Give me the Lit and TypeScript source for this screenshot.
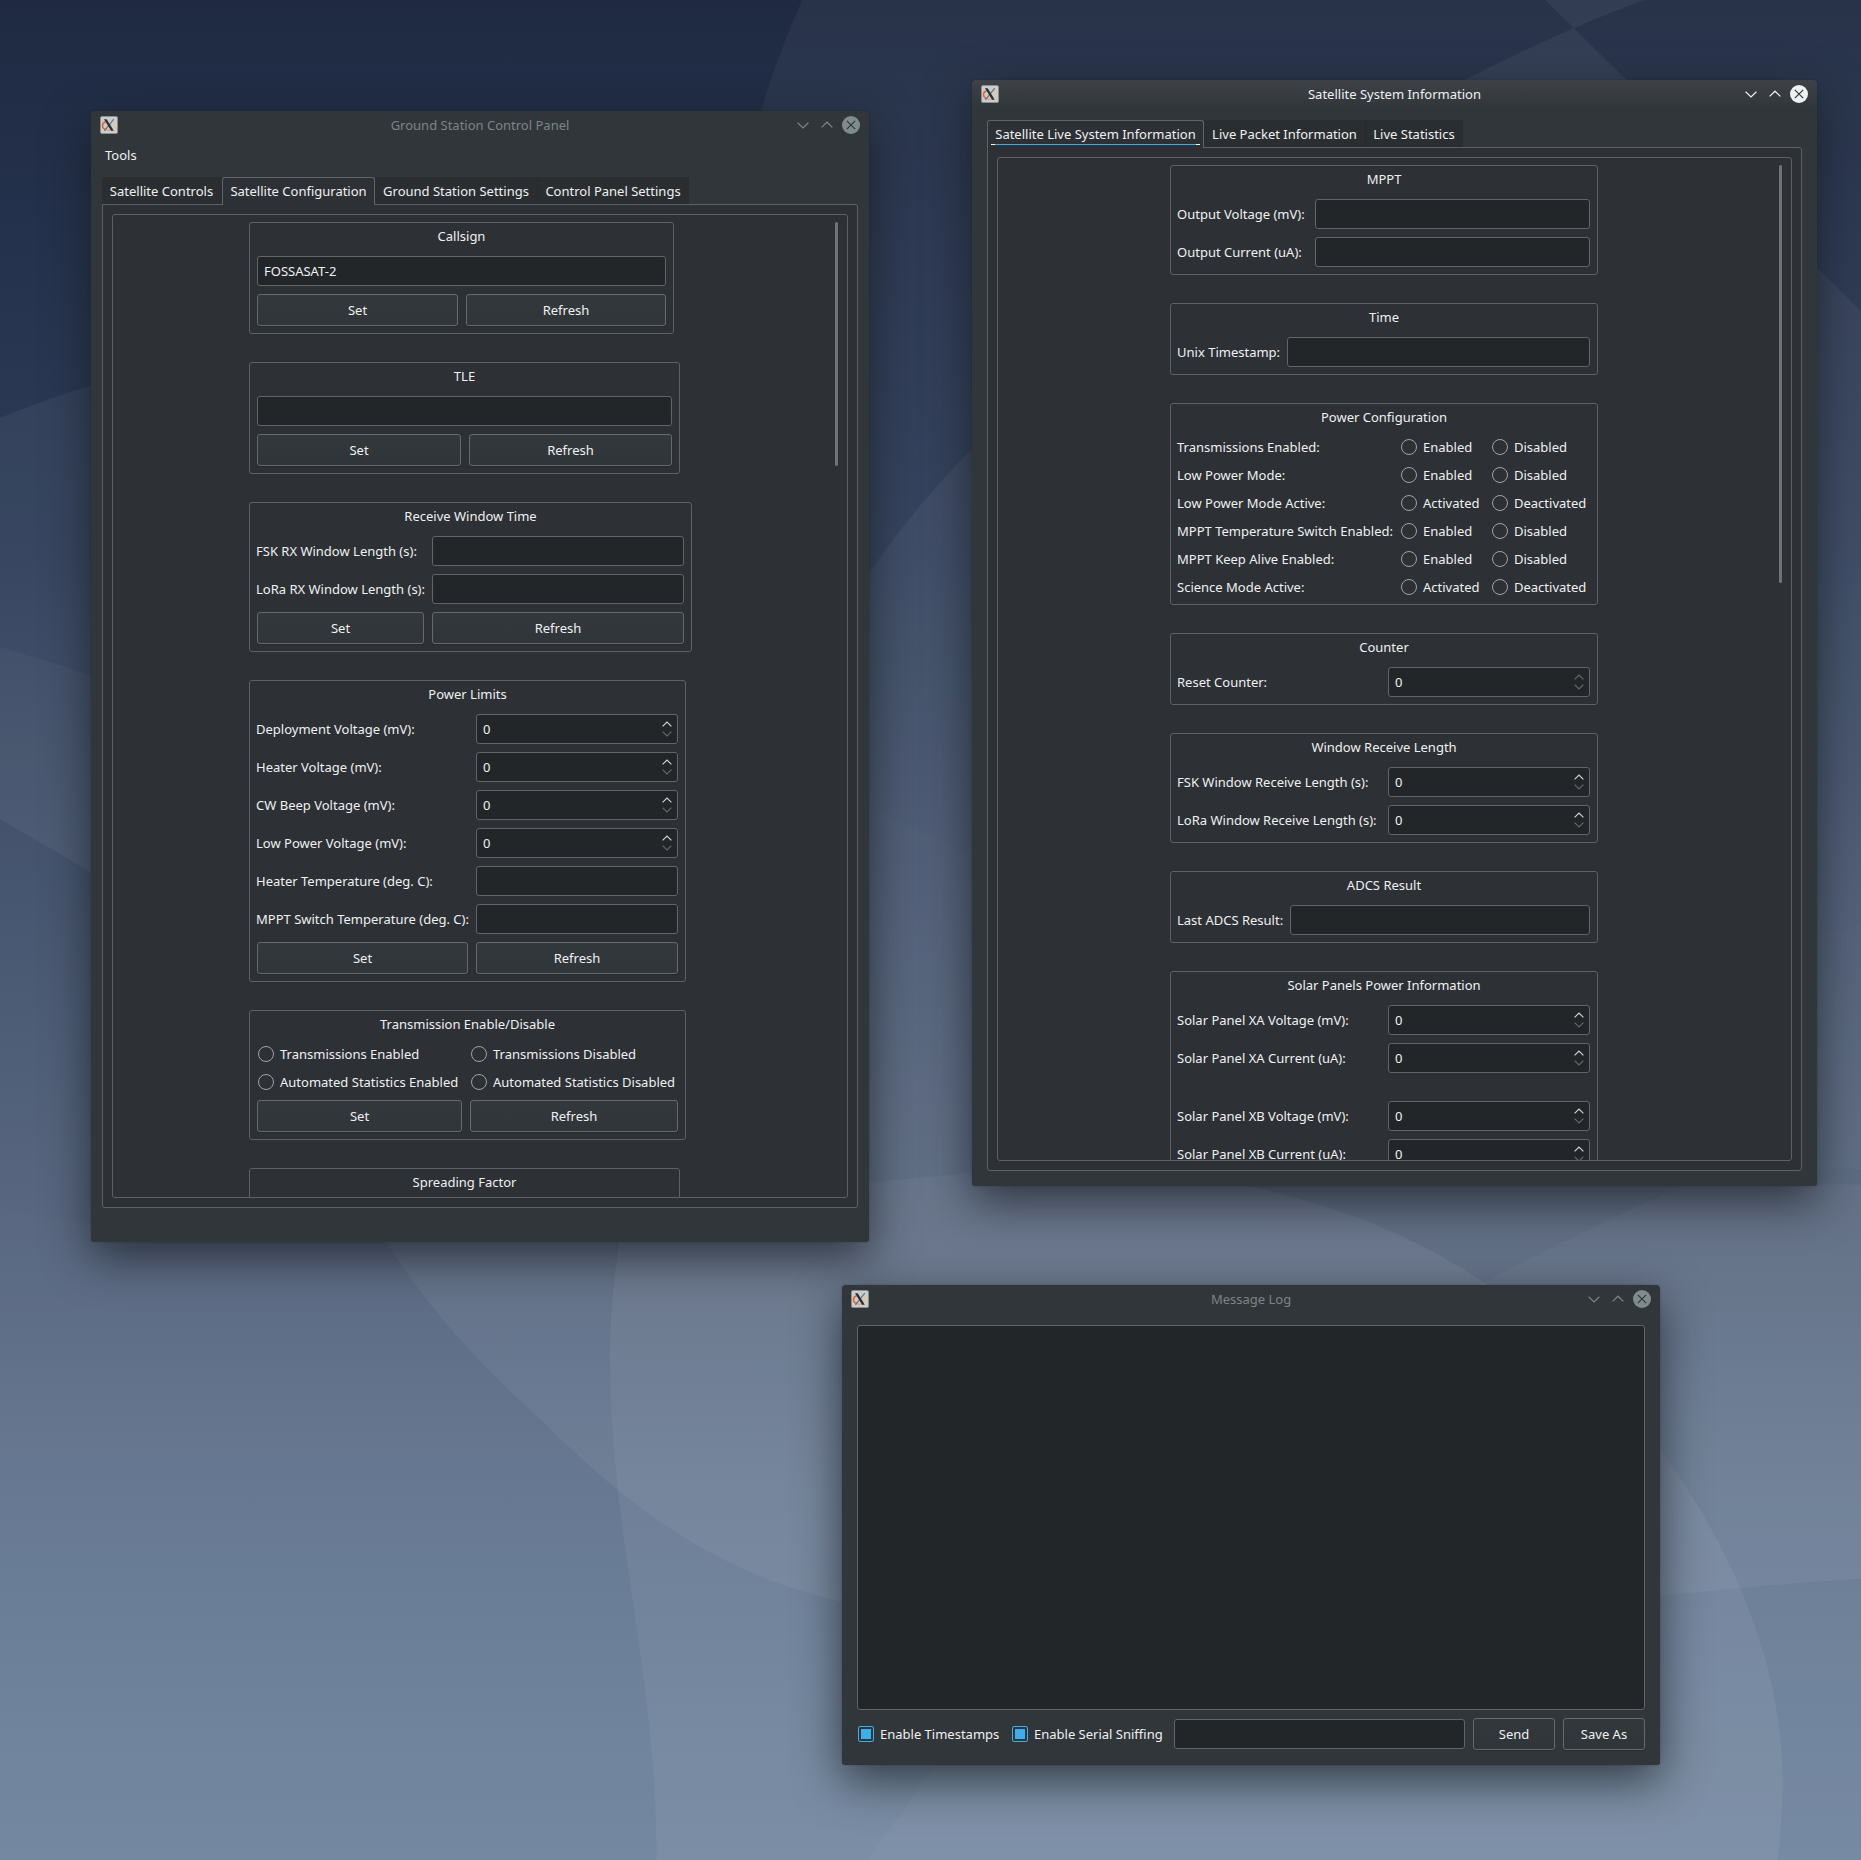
import { LitElement, html, css, svg, nothing, TemplateResult } from "lit";
import { customElement, property } from "lit/decorators.js";
import { classMap } from "lit/directives/class-map.js";
import { styleMap } from "lit/directives/style-map.js";

type Row =
  | { kind: "edit"; label?: string; value?: string }
  | { kind: "spin"; label: string; value: string; frozen?: boolean; spaced?: boolean }
  | { kind: "radio"; label?: string; options: [string, string] }
  | { kind: "buttons" };

interface Group {
  title: string;
  width: number;
  columns: string;
  rows: Row[];
}

interface Tab {
  label: string;
  width: number;
}

const edit = (label?: string, value = ""): Row => ({ kind: "edit", label, value });
const spin = (label: string, extra: { frozen?: boolean; spaced?: boolean } = {}): Row => ({
  kind: "spin",
  label,
  value: "0",
  ...extra,
});
const radio = (a: string, b: string, label?: string): Row => ({ kind: "radio", label, options: [a, b] });
const buttons: Row = { kind: "buttons" };

const CONFIG_TABS: Tab[] = [
  { label: "Satellite Controls", width: 120 },
  { label: "Satellite Configuration", width: 153 },
  { label: "Ground Station Settings", width: 163 },
  { label: "Control Panel Settings", width: 151 },
];

const INFO_TABS: Tab[] = [
  { label: "Satellite Live System Information", width: 217 },
  { label: "Live Packet Information", width: 162 },
  { label: "Live Statistics", width: 97 },
];

const CONFIG_GROUPS: Group[] = [
  { title: "Callsign", width: 425, columns: "201px minmax(0, 1fr)", rows: [edit(undefined, "FOSSASAT-2"), buttons] },
  { title: "TLE", width: 431, columns: "204px minmax(0, 1fr)", rows: [edit(), buttons] },
  {
    title: "Receive Window Time",
    width: 443,
    columns: "167px minmax(0, 1fr)",
    rows: [edit("FSK RX Window Length (s):"), edit("LoRa RX Window Length (s):"), buttons],
  },
  {
    title: "Power Limits",
    width: 437,
    columns: "211px minmax(0, 1fr)",
    rows: [
      spin("Deployment Voltage (mV):"),
      spin("Heater Voltage (mV):"),
      spin("CW Beep Voltage (mV):"),
      spin("Low Power Voltage (mV):"),
      edit("Heater Temperature (deg. C):"),
      edit("MPPT Switch Temperature (deg. C):"),
      buttons,
    ],
  },
  {
    title: "Transmission Enable/Disable",
    width: 437,
    columns: "205px minmax(0, 1fr)",
    rows: [
      radio("Transmissions Enabled", "Transmissions Disabled"),
      radio("Automated Statistics Enabled", "Automated Statistics Disabled"),
      buttons,
    ],
  },
  { title: "Spreading Factor", width: 431, columns: "204px minmax(0, 1fr)", rows: [edit()] },
];

const INFO_GROUPS: Group[] = [
  {
    title: "MPPT",
    width: 428,
    columns: "129px 1fr",
    rows: [edit("Output Voltage (mV):"), edit("Output Current (uA):")],
  },
  { title: "Time", width: 428, columns: "101px 1fr", rows: [edit("Unix Timestamp:")] },
  {
    title: "Power Configuration",
    width: 428,
    columns: "214px 83px minmax(0, 1fr)",
    rows: [
      radio("Enabled", "Disabled", "Transmissions Enabled:"),
      radio("Enabled", "Disabled", "Low Power Mode:"),
      radio("Activated", "Deactivated", "Low Power Mode Active:"),
      radio("Enabled", "Disabled", "MPPT Temperature Switch Enabled:"),
      radio("Enabled", "Disabled", "MPPT Keep Alive Enabled:"),
      radio("Activated", "Deactivated", "Science Mode Active:"),
    ],
  },
  { title: "Counter", width: 428, columns: "202px 1fr", rows: [spin("Reset Counter:", { frozen: true })] },
  {
    title: "Window Receive Length",
    width: 428,
    columns: "202px 1fr",
    rows: [spin("FSK Window Receive Length (s):"), spin("LoRa Window Receive Length (s):")],
  },
  { title: "ADCS Result", width: 428, columns: "104px 1fr", rows: [edit("Last ADCS Result:")] },
  {
    title: "Solar Panels Power Information",
    width: 428,
    columns: "202px 1fr",
    rows: [
      spin("Solar Panel XA Voltage (mV):"),
      spin("Solar Panel XA Current (uA):"),
      spin("Solar Panel XB Voltage (mV):", { spaced: true }),
      spin("Solar Panel XB Current (uA):"),
    ],
  },
];

const controls = css`
  * {
    box-sizing: border-box;
  }
  .edit,
  .spin {
    height: 30px;
    border: 1px solid #616569;
    border-radius: 3px;
    background: #232629;
    padding: 0 6px;
    display: flex;
    align-items: center;
  }
  .button {
    height: 32px;
    border: 1px solid #66696d;
    border-radius: 3px;
    background: linear-gradient(#33383c, #303539);
    box-shadow: 0 1px 1px rgba(0, 0, 0, 0.18);
    display: flex;
    align-items: center;
    justify-content: center;
  }
`;

/** A framed, titled box holding a form grid. */
@customElement("form-group")
export class FormGroup extends LitElement {
  @property({ attribute: false }) group!: Group;

  static styles = [
    controls,
    css`
      :host {
        display: block;
        flex: none;
      }
      .group {
        border: 1px solid #5d6165;
        border-radius: 3px;
        padding: 3px 7px 7px;
      }
      .title {
        height: 30px;
        text-align: center;
      }
      .rows {
        display: grid;
        gap: 8px;
      }
      .row {
        display: grid;
        column-gap: 8px;
        align-items: center;
      }
      .spaced {
        margin-top: 20px;
      }
      .label {
        margin: 0 -8px 0 -1px;
        white-space: nowrap;
      }
      .wide {
        grid-column: 1 / -1;
      }
      .spin {
        justify-content: space-between;
        padding-right: 5px;
      }
      .arrows {
        width: 10px;
        height: 18px;
        fill: none;
        stroke: #d3d5d6;
        stroke-width: 1.15;
      }
      .arrows .off {
        stroke: #64686b;
      }
      .radio {
        display: flex;
        align-items: center;
        gap: 6px;
        padding-left: 1px;
        height: 20px;
        white-space: nowrap;
      }
      .dot {
        width: 16px;
        height: 16px;
        flex: none;
        border: 1px solid #a0a3a5;
        border-radius: 50%;
      }
    `,
  ];

  private renderRow(row: Row): TemplateResult {
    switch (row.kind) {
      case "edit":
        return row.label
          ? html`<div class="label">${row.label}</div><div class="edit">${row.value}</div>`
          : html`<div class="edit wide">${row.value}</div>`;
      case "spin":
        return html`<div class="label">${row.label}</div>
          <div class="spin">
            <span>${row.value}</span>
            <svg class="arrows" viewBox="0 0 10 18">
              <path class=${row.frozen ? "off" : ""} d="M0.6 6.3 L5 2 L9.4 6.3" />
              <path class="off" d="M0.6 11.7 L5 16 L9.4 11.7" />
            </svg>
          </div>`;
      case "radio":
        return html`${row.label ? html`<div class="label">${row.label}</div>` : nothing}
        ${row.options.map((o) => html`<div class="radio"><span class="dot"></span>${o}</div>`)}`;
      case "buttons":
        return html`<div class="button">Set</div><div class="button">Refresh</div>`;
    }
  }

  render() {
    const g = this.group;
    return html`<div class="group" style=${styleMap({ width: `${g.width}px` })}>
      <div class="title">${g.title}</div>
      <div class="rows">
        ${g.rows.map(
          (r) => html`<div
            class=${classMap({ row: true, spaced: r.kind === "spin" && !!r.spaced })}
            style=${styleMap({ gridTemplateColumns: g.columns })}
          >
            ${this.renderRow(r)}
          </div>`
        )}
      </div>
    </div>`;
  }
}

@customElement("tabbed-form")
export class TabbedForm extends LitElement {
  @property({ attribute: false }) tabs: Tab[] = [];
  @property({ attribute: false }) groups: Group[] = [];
  @property({ type: Number }) active = 0;
  @property({ type: Number }) indent = 0;
  @property({ type: Number }) thumb = 0;
  @property({ type: Boolean }) focused = false;

  static styles = [
    controls,
    css`
      :host {
        display: flex;
        flex-direction: column;
        flex: 1;
        min-height: 0;
      }
      .tabs {
        display: flex;
        align-items: flex-start;
        height: 27px;
        flex: none;
      }
      .tab {
        height: 27px;
        line-height: 20px;
        padding: 4px 1px 0 0;
        text-align: center;
        background: #2a2e31;
        white-space: nowrap;
        flex: none;
      }
      .tab:first-child {
        border-top-left-radius: 3px;
      }
      .tab:last-child {
        border-top-right-radius: 3px;
      }
      .divided {
        padding-right: 0;
        border-right: 1px solid #262a2d;
      }
      .active {
        height: 28px;
        z-index: 1;
        position: relative;
        padding: 3px 0 0;
        border: 1px solid #616569;
        border-bottom: 0;
        border-radius: 3px 3px 0 0;
        background: #2d3035;
      }
      .focus {
        height: 1px;
        margin: 0 3px;
        background: linear-gradient(90deg, #fcfcfc 4px, #3daee9 4px, #3daee9 calc(100% - 4px), #fcfcfc calc(100% - 4px));
      }
      .panel {
        flex: 1;
        min-height: 0;
        border: 1px solid #5d6165;
        border-radius: 0 3px 3px 3px;
        background: #2d3035;
        padding: 9px;
        display: flex;
      }
      .scroll {
        flex: 1;
        border: 1px solid #5d6165;
        border-radius: 3px;
        display: flex;
        justify-content: space-between;
        overflow: hidden;
        padding: 7px 9px 0 0;
      }
      .column {
        display: flex;
        flex-direction: column;
        gap: 28px;
      }
      .thumb {
        width: 3px;
        border-radius: 2px;
        background: #6f7376;
      }
    `,
  ];

  render() {
    return html`
      <div class="tabs">
        ${this.tabs.map(
          (t, i) => html`<div
            class=${classMap({
              tab: true,
              active: i === this.active,
              divided: i > this.active && i < this.tabs.length - 1,
            })}
            style=${styleMap({ width: `${t.width}px` })}
          >
            ${t.label}${this.focused && i === this.active ? html`<div class="focus"></div>` : nothing}
          </div>`
        )}
      </div>
      <div class="panel">
        <div class="scroll">
          <div class="column" style=${styleMap({ marginLeft: `${this.indent}px` })}>
            ${this.groups.map((g) => html`<form-group .group=${g}></form-group>`)}
          </div>
          <div class="thumb" style=${styleMap({ height: `${this.thumb}px` })}></div>
        </div>
      </div>
    `;
  }
}

/** Window frame with title bar. */
@customElement("desk-window")
export class DeskWindow extends LitElement {
  @property() heading = "";
  @property({ type: Boolean, reflect: true }) active = false;

  static styles = css`
    * {
      box-sizing: border-box;
    }
    :host {
      display: flex;
      flex-direction: column;
      background: #31363a;
      border-radius: 4px 4px 3px 3px;
      box-shadow: 0 15px 46px rgba(22, 26, 30, 0.7), 0 0 2px rgba(16, 20, 26, 0.3);
    }
    .bar {
      height: 28px;
      flex: none;
      display: grid;
      grid-template-columns: 66px 1fr 66px;
      align-items: center;
      padding: 0 9px;
      border-radius: 4px 4px 0 0;
      color: #7c8586;
    }
    :host([active]) .bar {
      background: linear-gradient(#3e4248, #31363a);
      color: #eff0f1;
    }
    .title {
      text-align: center;
    }
    .icon {
      width: 18px;
      height: 18px;
      display: block;
    }
    .tools {
      width: 66px;
      height: 18px;
      display: block;
      fill: none;
      stroke: currentColor;
      stroke-width: 1.2;
    }
    .disc {
      fill: #7f8c8d;
      stroke: none;
    }
    :host([active]) .disc {
      fill: #eff0f1;
    }
    .cross {
      stroke: #31363b;
    }
  `;

  render() {
    return html`
      <div class="bar">
        <svg class="icon" viewBox="0 0 18 18">
          <rect x="0.5" y="0.5" width="17" height="17" rx="1.5" fill="#c9cdcf" stroke="#8b9093" />
          <path d="M5.6 5.8 C1.4 7.4 1.4 12 5.8 13.6" fill="none" stroke="#e9612f" stroke-width="1.5" />
          <path d="M5.8 13.6 C7.6 14.5 10.4 14.5 12.2 13.6" fill="none" stroke="#e3a77c" stroke-width="1.2" />
          <path d="M12.2 13.6 C16.4 12 16.4 8.4 13.4 6.2" fill="none" stroke="#e8c999" stroke-width="1.5" />
          <path d="M13.8 3.2 L4.4 14.8" stroke="#6d7274" stroke-width="1.2" />
          <path d="M4 3.2 H6.7 L13.8 14.8 H11.1 Z" fill="#2b2f32" />
        </svg>
        <div class="title">${this.heading}</div>
        <svg class="tools" viewBox="0 0 66 18">
          <path d="M3.6 6.8 L9 12 L14.4 6.8" />
          <path d="M27.6 11.4 L33 6.2 L38.4 11.4" />
          <circle class="disc" cx="57" cy="9" r="9" />
          <path class="cross" d="M52.8 4.8 L61.2 13.2 M61.2 4.8 L52.8 13.2" />
        </svg>
      </div>
      <slot></slot>
    `;
  }
}

const wallpaper = svg`
  <defs>
    <linearGradient id="sky" x1="0" y1="0" x2="0" y2="1">
      <stop offset="0" stop-color="#1f2a42" />
      <stop offset="0.13" stop-color="#25324d" />
      <stop offset="0.3" stop-color="#2e3d59" />
      <stop offset="0.45" stop-color="#3f4e69" />
      <stop offset="0.65" stop-color="#53627b" />
      <stop offset="0.8" stop-color="#62748e" />
      <stop offset="1" stop-color="#6f849e" />
    </linearGradient>
  </defs>
  <rect width="1568" height="1567" fill="url(#sky)" />
  <g fill="#ffffff">
    <path fill-opacity="0.045" d="M676 0 C640 80 615 170 612 280 C612 500 640 640 700 700 L732 678 L819 721 C1000 800 1300 830 1568 780 V0 Z" />
    <path fill-opacity="0.05" d="M1385 0 C1200 70 1000 190 819 378 Q772 425 732 483 C600 650 540 840 530 1010 L732 996 L819 988 L1568 985 V262 L1302 0 Z" />
    <path fill-opacity="0.05" d="M0 352 C90 315 200 290 320 290 C480 300 600 500 640 640 C670 655 700 665 732 678 L819 721 C1000 800 1300 830 1568 780 V1330 C1380 1340 1000 1400 760 1360 C640 1340 560 1300 460 1200 Q375 1125 325 1046 C270 960 180 800 77 735 L0 690 Z" />
    <path fill-opacity="0.03" d="M0 545 C120 580 300 640 420 800 C500 950 600 1010 732 996 L819 988 L1568 985 V1567 H0 Z" />
    <path fill-opacity="0.012" d="M0 1018 L120 1040 H520 Q514 1080 514 1130 C512 1290 553 1400 553 1567 H0 Z" />
    <path fill-opacity="0.06" d="M530 1010 L732 996 L819 988 C980 975 1130 1000 1250 1080 C1400 1180 1502 1350 1502 1500 Q1502 1530 1498 1567 H553 C553 1400 512 1290 514 1130 Q516 1060 530 1010 Z" />
    <path fill-opacity="0.03" d="M1250 1080 C1050 1180 850 1390 732 1567 H1498 Q1502 1530 1502 1500 C1502 1350 1400 1180 1250 1080 Z" />
    <path fill-opacity="0.03" d="M1250 1080 C1310 1050 1370 1020 1420 998 H1568 V1567 H1498 Q1502 1530 1502 1500 C1502 1350 1400 1180 1250 1080 Z" />
  </g>
`;

@customElement("app-root")
export class AppRoot extends LitElement {
  static styles = [
    controls,
    css`
      :host {
        display: block;
        position: relative;
        width: 1861px;
        height: 1860px;
        overflow: hidden;
        font: 13px/20px "Noto Sans", "Open Sans", sans-serif;
        color: #eff0f1;
      }
      .wallpaper {
        position: absolute;
        inset: 0;
        width: 100%;
        height: 100%;
      }
      .control,
      .info,
      .log {
        position: absolute;
      }
      .control {
        left: 91px;
        top: 111px;
        width: 778px;
        height: 1131px;
      }
      .info {
        left: 972px;
        top: 80px;
        width: 845px;
        height: 1106px;
      }
      .log {
        left: 842px;
        top: 1285px;
        width: 818px;
        height: 480px;
      }
      .menu {
        height: 38px;
        padding: 6px 14px 0;
        flex: none;
      }
      .body {
        flex: 1;
        min-height: 0;
        display: flex;
        flex-direction: column;
      }
      .control .body {
        padding: 0 11px 34px;
      }
      .info .body,
      .log .body {
        padding: 12px 15px 15px;
      }
      .log .body {
        gap: 8px;
      }
      .messages {
        flex: 1;
        border: 1px solid #616569;
        border-radius: 3px;
        background: #232629;
      }
      .footer {
        display: grid;
        grid-template-columns: 146px 155px 1fr 82px 82px;
        column-gap: 8px;
        align-items: center;
      }
      .check {
        display: flex;
        align-items: center;
        gap: 6px;
        padding-left: 1px;
        white-space: nowrap;
      }
      .box {
        width: 16px;
        height: 16px;
        padding: 2px;
        flex: none;
        border: 1px solid #3daee9;
        border-radius: 2px;
        background: #3daee9 content-box;
      }
    `,
  ];

  render() {
    return html`
      <svg class="wallpaper" viewBox="0 0 1568 1567" preserveAspectRatio="none">${wallpaper}</svg>

      <desk-window class="control" heading="Ground Station Control Panel">
        <div class="menu">Tools</div>
        <div class="body">
          <tabbed-form .tabs=${CONFIG_TABS} .groups=${CONFIG_GROUPS} .active=${1} .indent=${136} .thumb=${244}></tabbed-form>
        </div>
      </desk-window>

      <desk-window class="info" heading="Satellite System Information" active>
        <div class="body">
          <tabbed-form .tabs=${INFO_TABS} .groups=${INFO_GROUPS} .indent=${172} .thumb=${418} focused></tabbed-form>
        </div>
      </desk-window>

      <desk-window class="log" heading="Message Log">
        <div class="body">
          <div class="messages"></div>
          <div class="footer">
            <div class="check"><span class="box"></span>Enable Timestamps</div>
            <div class="check"><span class="box"></span>Enable Serial Sniffing</div>
            <div class="edit"></div>
            <div class="button">Send</div>
            <div class="button">Save As</div>
          </div>
        </div>
      </desk-window>
    `;
  }
}
